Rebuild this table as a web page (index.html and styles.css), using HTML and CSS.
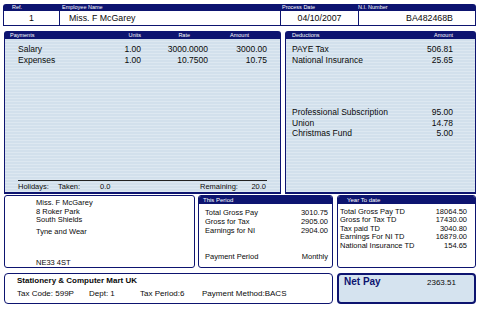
FILE: index.html
```html
<!DOCTYPE html>
<html>
<head>
<meta charset="utf-8">
<link rel="stylesheet" href="styles.css">
</head>
<body>
<div class="slip">
  <div class="top">
    <div class="top-bar">
      <span class="w-ref l-ref">Ref.</span>
      <span class="w-name l-name">Employee Name</span>
      <span class="w-date l-date">Process Date</span>
      <span class="w-ni l-ni">N.I. Number</span>
    </div>
    <div class="top-vals">
      <div class="w-ref v-center">1</div>
      <div class="w-name v-name sep">Miss. F McGarey</div>
      <div class="w-date v-center sep">04/10/2007</div>
      <div class="w-ni v-ni sep">BA482468B</div>
    </div>
  </div>

  <div class="mid">
    <section class="panel pay">
      <div class="bar pay-grid">
        <span class="h-pay">Payments</span>
        <span class="num">Units</span>
        <span class="num h-rate">Rate</span>
        <span class="num h-amt">Amount</span>
      </div>
      <div class="body">
        <div class="pay-grid row"><span>Salary</span><span class="num">1.00</span><span class="num">3000.0000</span><span class="num">3000.00</span></div>
        <div class="pay-grid row"><span>Expenses</span><span class="num">1.00</span><span class="num">10.7500</span><span class="num">10.75</span></div>
        <div class="hol">
          <span class="h1">Holidays:</span>
          <span class="h2">Taken:</span>
          <span class="h3">0.0</span>
          <span class="h4">Remaining:</span>
          <span class="h5">20.0</span>
        </div>
      </div>
    </section>
    <section class="panel ded">
      <div class="bar ded-grid">
        <span>Deductions</span>
        <span class="num">Amount</span>
      </div>
      <div class="body">
        <div class="ded-grid row"><span>PAYE Tax</span><span class="num">506.81</span></div>
        <div class="ded-grid row"><span>National Insurance</span><span class="num">25.65</span></div>
        <div class="spacer"></div>
        <div class="ded-grid row"><span>Professional Subscription</span><span class="num">95.00</span></div>
        <div class="ded-grid row"><span>Union</span><span class="num">14.78</span></div>
        <div class="ded-grid row"><span>Christmas Fund</span><span class="num">5.00</span></div>
      </div>
    </section>
  </div>

  <div class="low">
    <div class="box addr">
      <div class="aline">Miss. F McGarey</div>
      <div class="aline">8 Roker Park</div>
      <div class="aline">South Shields</div>
      <div class="aline a-gap">Tyne and Wear</div>
      <div class="aline a-last">NE33 4ST</div>
    </div>
    <div class="box period">
      <div class="sbar p-title">This Period</div>
      <div class="slist p-list">
        <div class="srow"><span>Total Gross Pay</span><span>3010.75</span></div>
        <div class="srow"><span>Gross for Tax</span><span>2905.00</span></div>
        <div class="srow"><span>Earnings for NI</span><span>2904.00</span></div>
        <div class="srow p-gap"><span>Payment Period</span><span>Monthly</span></div>
      </div>
    </div>
    <div class="box ytd">
      <div class="sbar y-title">Year To date</div>
      <div class="slist y-list">
        <div class="yrow"><span>Total Gross Pay TD</span><span>18064.50</span></div>
        <div class="yrow"><span>Gross for Tax TD</span><span>17430.00</span></div>
        <div class="yrow"><span>Tax paid TD</span><span>3040.80</span></div>
        <div class="yrow"><span>Earnings For NI TD</span><span>16879.00</span></div>
        <div class="yrow"><span>National Insurance TD</span><span>154.65</span></div>
      </div>
    </div>
  </div>

  <div class="bot">
    <div class="box company">
      <div class="cname">Stationery &amp; Computer Mart UK</div>
      <div class="cinfo">
        <span class="ci1">Tax Code: 599P</span>
        <span class="ci2">Dept: 1</span>
        <span class="ci3">Tax Period:6</span>
        <span>Payment Method:BACS</span>
      </div>
    </div>
    <div class="net">
      <span class="net-lbl">Net Pay</span>
      <span class="net-val">2363.51</span>
    </div>
  </div>
</div>
</body>
</html>
```

FILE: styles.css
```css
* { box-sizing: border-box; }
html, body { margin: 0; padding: 0; background: #fff; }
body {
  width: 480px;
  height: 317px;
  overflow: hidden;
  font-family: "Liberation Sans", Arial, sans-serif;
  color: #0a0a0a;
}
.slip { width: 480px; }

/* top row */
.top { margin: 4px 4px 0 3px; }
.top-bar {
  display: flex;
  height: 6px;
  background: #0d1470;
  border-radius: 3px 3px 0 0;
  color: #fff;
  font-size: 5.5px;
  line-height: 6px;
}
.top-vals {
  display: flex;
  height: 16px;
  border: 1px solid #0d1470;
  font-size: 8.8px;
  line-height: 15px;
  background: #fff;
}
.w-ref { width: 55px; }
.w-name { width: 221px; }
.w-date { width: 78px; }
.w-ni { flex: 1; }
.l-ref { padding-left: 9px; }
.l-name { padding-left: 4px; }
.l-date { padding-left: 3px; }
.l-ni { padding-left: 1px; }
.sep { border-left: 1px solid #0d1470; }
.v-center { text-align: center; }
.v-name { padding-left: 9px; }
.v-ni { text-align: right; padding-right: 22px; }

/* middle panels */
.mid {
  display: flex;
  gap: 4px;
  margin: 5px 4px 0 4px;
  height: 163px;
}
.panel {
  border: 1px solid #0d1470;
  border-bottom-width: 2px;
  border-radius: 3px 3px 0 0;
  display: flex;
  flex-direction: column;
  background: #fff;
}
.pay { width: 277px; }
.ded { flex: 1; }
.bar {
  height: 7px;
  background: #0d1470;
  color: #fff;
  font-size: 5.5px;
  line-height: 7px;
}
.body {
  flex: 1;
  display: flex;
  flex-direction: column;
  padding-top: 5px;
  background: repeating-linear-gradient(to bottom, #d2e0ec 0, #d2e0ec 2px, #dde8f1 2px, #dde8f1 3px);
}
.row { font-size: 8.5px; line-height: 10.5px; }
.num { text-align: right; }
.pay-grid {
  display: grid;
  grid-template-columns: 90px 33px 67px 59px;
  padding: 0 13px;
}
.h-pay { margin-left: -8px; }
.h-rate { padding-right: 18px; }
.h-amt { padding-right: 18px; }
.hol {
  margin: auto 13px 0 13px;
  border-top: 1px solid #222;
  padding-top: 1px;
  display: flex;
  font-size: 7.5px;
  line-height: 10px;
  height: 12px;
}
.h1 { width: 40px; }
.h2 { width: 42px; }
.h3 { width: 100px; }
.h5 { margin-left: auto; padding-right: 1px; }

.ded-grid {
  display: grid;
  grid-template-columns: 1fr auto;
  padding: 0 22px 0 6px;
}
.spacer { height: 42px; }

/* lower row */
.low {
  display: flex;
  margin: 1px 4px 0 4px;
  height: 73px;
}
.box {
  border: 1px solid #0d1470;
  border-radius: 3px;
  background: #fff;
}
.addr {
  width: 191px;
  margin-right: 3px;
  padding: 3px 0 0 31px;
  display: flex;
  flex-direction: column;
  font-size: 7.5px;
  line-height: 8.5px;
}
.a-gap { margin-top: 3px; }
.a-last { margin-top: auto; }
.period { width: 135px; margin-right: 4px; overflow: hidden; }
.ytd { flex: 1; overflow: hidden; }
.sbar {
  height: 8px;
  background: #0d1470;
  color: #fff;
  font-size: 6px;
  line-height: 8px;
}
.p-title { padding-left: 4px; }
.y-title { padding-left: 9px; }
.slist { font-size: 7.5px; }
.p-list { padding: 4px 4px 0 6px; line-height: 9px; }
.y-list { padding: 3.5px 8px 0 2px; line-height: 8.5px; }
.srow, .yrow { display: flex; justify-content: space-between; }
.p-gap { margin-top: 17px; }

/* bottom row */
.bot {
  display: flex;
  margin: 5px 4px 0 4px;
  height: 31px;
}
.company {
  width: 329px;
  margin-right: 4px;
  border-radius: 4px;
  padding: 2px 0 0 12px;
  font-size: 8px;
  line-height: 10px;
}
.cname { font-weight: bold; }
.cinfo { display: flex; margin-top: 3px; }
.ci1 { width: 72px; }
.ci2 { width: 51px; }
.ci3 { width: 62px; }
.net {
  flex: 1;
  border: 2px solid #0d1470;
  border-radius: 4px;
  background: #d5e3ef;
  display: flex;
  align-items: baseline;
  padding: 1px 0 0 5px;
  line-height: 12px;
}
.net-lbl { color: #0d1470; font-weight: bold; font-size: 10px; width: 83px; }
.net-val { font-size: 8px; }
```
